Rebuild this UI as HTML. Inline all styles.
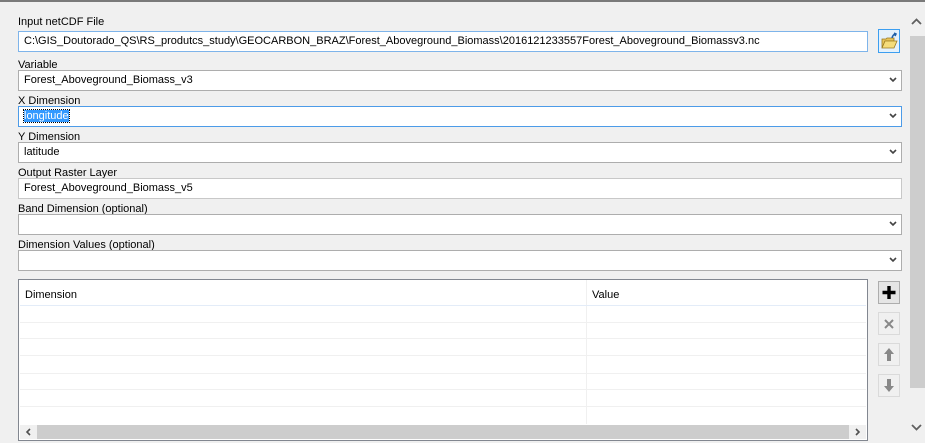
<!DOCTYPE html><html><head><style>
body{margin:0;width:925px;height:443px;background:#f0f0f0;position:relative;overflow:hidden;font-family:"Liberation Sans",sans-serif;font-size:11px;color:#000}
div{position:absolute;box-sizing:border-box}
.lbl{left:18px}
.box{left:18px;background:#fff;border:1px solid #adadad;height:21px;padding:3px 0 0 5px;white-space:nowrap;overflow:hidden}
.cb{width:884px}
.arr{position:absolute;right:4px;top:6px;width:8px;height:6px}
.row{left:1px;right:1px;height:1px;background:#f0f0f0}
.btn{left:878px;width:22px;height:23px;border:1px solid #dadada;background:#f0f0f0}
</style></head><body>
<div style="left:0;top:0;width:925px;height:2px;background:#7a7a7a"></div>
<div class="lbl" style="top:16px">Input netCDF File</div>
<div class="box" style="top:31px;width:850px;border-color:#7eb4ea">C:\GIS_Doutorado_QS\RS_produtcs_study\GEOCARBON_BRAZ\Forest_Aboveground_Biomass\2016121233557Forest_Aboveground_Biomassv3.nc</div>
<div style="left:878px;top:29px;width:22px;height:24px;border:1px solid #3c9ef0;background:#e5f1fb">
<svg width="20" height="22" style="position:absolute;left:0;top:0"><path d="M3 9h4l1-1h7v3H6l-3 7z" fill="#e8c55a" stroke="#9a7a20" stroke-width=".8"/><path d="M3 18l3-7h12l-3 7z" fill="#f5dc7a" stroke="#9a7a20" stroke-width=".8"/><path d="M13 8q1-4 4-4M15 3l2 1-1 2" fill="none" stroke="#1f5fa8" stroke-width="1.5"/></svg></div>
<div class="lbl" style="top:59px">Variable</div>
<div class="box cb" style="top:70px">Forest_Aboveground_Biomass_v3<svg class="arr" viewBox="0 0 8 6"><path d="M1 1l3 3 3-3" fill="none" stroke="#444" stroke-width="1.6"/></svg></div>
<div class="lbl" style="top:95px">X Dimension</div>
<div class="box cb" style="top:106px;border-color:#4c9be8"><span style="background:#3399ff;color:#fff;outline:1px dotted #000">longitude</span><svg class="arr" viewBox="0 0 8 6"><path d="M1 1l3 3 3-3" fill="none" stroke="#444" stroke-width="1.6"/></svg></div>
<div class="lbl" style="top:131px">Y Dimension</div>
<div class="box cb" style="top:142px">latitude<svg class="arr" viewBox="0 0 8 6"><path d="M1 1l3 3 3-3" fill="none" stroke="#444" stroke-width="1.6"/></svg></div>
<div class="lbl" style="top:167px">Output Raster Layer</div>
<div class="box cb" style="top:178px;border-color:#c8c8c8">Forest_Aboveground_Biomass_v5</div>
<div class="lbl" style="top:203px">Band Dimension (optional)</div>
<div class="box cb" style="top:214px"><svg class="arr" viewBox="0 0 8 6"><path d="M1 1l3 3 3-3" fill="none" stroke="#444" stroke-width="1.6"/></svg></div>
<div class="lbl" style="top:239px">Dimension Values (optional)</div>
<div class="box cb" style="top:250px"><svg class="arr" viewBox="0 0 8 6"><path d="M1 1l3 3 3-3" fill="none" stroke="#444" stroke-width="1.6"/></svg></div>
<div style="left:18px;top:279px;width:850px;height:162px;border:1px solid #828790;background:#fff">
<div style="left:6px;top:9px">Dimension</div>
<div style="left:573px;top:9px">Value</div>
<div style="left:567px;top:0;width:1px;height:144px;background:#f0f0f0"></div>
<div class="row" style="top:25px;background:#e3ecf8"></div>
<div class="row" style="top:42px"></div><div class="row" style="top:58px"></div><div class="row" style="top:75px"></div><div class="row" style="top:93px"></div><div class="row" style="top:109px"></div><div class="row" style="top:126px"></div>
<div style="left:1px;top:145px;width:846px;height:14px;background:#f0f0f0"><div style="left:17px;top:0;width:812px;height:14px;background:#cdcdcd"></div>
<svg width="8" height="8" style="position:absolute;left:5px;top:3px"><path d="M5 1L2 4l3 3" fill="none" stroke="#505050" stroke-width="1.6"/></svg>
<svg width="8" height="8" style="position:absolute;left:834px;top:3px"><path d="M2 1l3 3-3 3" fill="none" stroke="#505050" stroke-width="1.6"/></svg></div>
</div>
<div class="btn" style="top:281px;border-color:#adadad;background:#e5e5e5"><svg width="20" height="21"><path d="M10 4v13M3.5 10.5h13" stroke="#000" stroke-width="3.4"/></svg></div>
<div class="btn" style="top:312px"><svg width="20" height="21"><path d="M6 7l8 8M14 7l-8 8" stroke="#888" stroke-width="2"/></svg></div>
<div class="btn" style="top:343px"><svg width="20" height="21"><path d="M10 4l-5 6h3v7h4v-7h3z" fill="#888"/></svg></div>
<div class="btn" style="top:374px"><svg width="20" height="21"><path d="M10 17l-5-6h3V4h4v7h3z" fill="#888"/></svg></div>
<div style="left:908px;top:2px;width:17px;height:441px;background:#f0f0f0">
<svg width="17" height="14" style="position:absolute;top:13px;left:0"><path d="M4 9l4.5-4.5L13 9" fill="none" stroke="#606060" stroke-width="1.8"/></svg>
<div style="left:2px;top:34px;width:15px;height:352px;background:#cdcdcd"></div>
<svg width="17" height="14" style="position:absolute;top:418px;left:0"><path d="M4 5l4.5 4.5L13 5" fill="none" stroke="#606060" stroke-width="1.8"/></svg>
</div>
</body></html>
